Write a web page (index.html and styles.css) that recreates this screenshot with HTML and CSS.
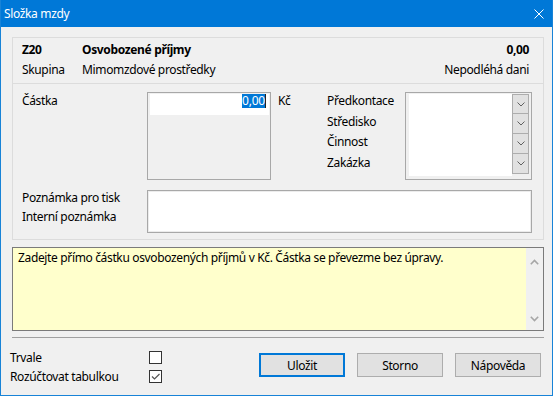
FILE: index.html
```html
<!DOCTYPE html>
<html lang="cs">
<head>
<meta charset="UTF-8">
<title>Složka mzdy</title>
<link rel="stylesheet" href="styles.css">
</head>
<body>
<div class="window">
<div class="titlebar">
<span class="title">Složka mzdy</span>
<svg class="close" width="10" height="10" viewBox="0 0 10 10"><path d="M0.5 0.5L9.5 9.5M9.5 0.5L0.5 9.5" stroke="#fff" stroke-width="1"/></svg>
</div>

<div class="client">
<div class="group">
<div class="head">
<div class="head-row bold">
<span>Z20</span>
<span>Osvobozené příjmy</span>
<span class="right">0,00</span>
</div>
<div class="head-row">
<span>Skupina</span>
<span>Mimomzdové prostředky</span>
<span class="right">Nepodléhá dani</span>
</div>
</div>

<div class="form">
<div class="amount-row">
<div class="label">Částka</div>
<div class="amount-box">
<div class="amount-field"><span class="sel">0,00</span><span class="caret"></span></div>
</div>
<div class="unit">Kč</div>
<div class="labels">
<div>Předkontace</div>
<div>Středisko</div>
<div>Činnost</div>
<div>Zakázka</div>
</div>
<div class="combo">
<div class="combo-list"></div>
<div class="combo-buttons">
<div class="drop"><svg width="8" height="5" viewBox="0 0 8 5"><path d="M0.5 0.5L4 4L7.5 0.5" fill="none" stroke="#606060"/></svg></div>
<div class="drop"><svg width="8" height="5" viewBox="0 0 8 5"><path d="M0.5 0.5L4 4L7.5 0.5" fill="none" stroke="#606060"/></svg></div>
<div class="drop"><svg width="8" height="5" viewBox="0 0 8 5"><path d="M0.5 0.5L4 4L7.5 0.5" fill="none" stroke="#606060"/></svg></div>
<div class="drop"><svg width="8" height="5" viewBox="0 0 8 5"><path d="M0.5 0.5L4 4L7.5 0.5" fill="none" stroke="#606060"/></svg></div>
</div>
</div>
</div>

<div class="note-row">
<div class="note-labels">
<div>Poznámka pro tisk</div>
<div>Interní poznámka</div>
</div>
<div class="note-box"></div>
</div>
</div>
</div>

<div class="hint">
<div class="hint-text">Zadejte přímo částku osvobozených příjmů v Kč. Částka se převezme bez úpravy.</div>
<div class="scrollbar">
<svg width="9" height="6" viewBox="0 0 9 6"><path d="M0.8 5.2L4.5 1.5L8.2 5.2" fill="none" stroke="#a6a6a6" stroke-width="1.6"/></svg>
<svg width="9" height="6" viewBox="0 0 9 6"><path d="M0.8 0.8L4.5 4.5L8.2 0.8" fill="none" stroke="#a6a6a6" stroke-width="1.6"/></svg>
</div>
</div>

<div class="separator"></div>

<div class="footer">
<div class="checks">
<div>Trvale</div>
<div class="checkbox"></div>
<div>Rozúčtovat tabulkou</div>
<div class="checkbox"><svg width="11" height="11" viewBox="0 0 11 11"><path d="M2 5.5L4.5 8L9.5 3" fill="none" stroke="#555" stroke-width="1.2"/></svg></div>
</div>
<div class="buttons">
<button class="btn default">Uložit</button>
<button class="btn">Storno</button>
<button class="btn">Nápověda</button>
</div>
</div>
</div>
</div>
</body>
</html>
```

FILE: styles.css
```css
body {
margin: 0;
font-family: "Noto Sans", "Open Sans", sans-serif;
font-size: 12px;
letter-spacing: -0.35px;
color: #000;
background: #f0f0f0;
}
.window {
width: 553px;
height: 396px;
box-sizing: border-box;
border: 1px solid #1883d7;
border-top: 0;
background: #f0f0f0;
display: flex;
flex-direction: column;
}
.titlebar {
height: 27px;
flex-shrink: 0;
background: #0078d7;
color: #fff;
display: flex;
align-items: center;
justify-content: space-between;
padding: 0 8px 0 3px;
}
.client {
flex: 1;
padding: 10px 8px 0 11px;
display: flex;
flex-direction: column;
}
.group {
border: 1px solid #dcdcdc;
}
.head {
padding: 2px 14px 3px 9px;
border-bottom: 1px solid #dcdcdc;
}
.head-row {
display: grid;
grid-template-columns: 60px 1fr auto;
line-height: 20px;
}
.bold {
font-weight: bold;
}
.form {
padding: 8px 11px 6px 9px;
}
.amount-row {
display: flex;
height: 88px;
}
.label {
width: 125px;
line-height: 20px;
margin-top: -1px;
}
.amount-box {
width: 124px;
box-sizing: border-box;
border: 1px solid #a8a8a8;
padding: 1px 1px 0 2px;
}
.amount-field {
height: 21px;
background: #fff;
display: flex;
justify-content: flex-end;
align-items: flex-start;
padding-right: 3px;
}
.sel {
background: #0078d7;
color: #fff;
line-height: 14px;
letter-spacing: -0.2px;
}
.caret {
width: 1px;
height: 14px;
background: #222;
}
.unit {
width: 56px;
padding-left: 7px;
box-sizing: border-box;
line-height: 20px;
margin-top: -1px;
}
.labels {
width: 78px;
line-height: 20.5px;
margin-top: -1px;
}
.combo {
flex: 1;
box-sizing: border-box;
border: 1px solid #a8a8a8;
padding: 1px 2px 3px 3px;
display: flex;
}
.combo-list {
flex: 1;
background: #fff;
}
.combo-buttons {
width: 17px;
display: flex;
flex-direction: column;
}
.drop {
height: 20px;
box-sizing: border-box;
background: #e1e1e1;
border: 1px solid #adadad;
border-top-width: 0;
display: flex;
align-items: center;
justify-content: center;
}
.drop:first-child {
border-top-width: 1px;
}
.note-row {
display: flex;
margin-top: 10px;
}
.note-labels {
width: 125px;
line-height: 19px;
margin-top: -2px;
}
.note-box {
flex: 1;
height: 43px;
box-sizing: border-box;
border: 1px solid #a8a8a8;
background: #fff;
box-shadow: inset 0 0 0 1px #ececec;
}
.hint {
margin-top: 7px;
height: 84px;
box-sizing: border-box;
border: 1px solid #7a7a7a;
background: #ffffcc;
display: flex;
}
.hint-text {
flex: 1;
padding: 2px 5px;
line-height: 15px;
}
.scrollbar {
width: 17px;
background: #f0f0f0;
display: flex;
flex-direction: column;
justify-content: space-between;
align-items: center;
padding: 11px 0 8px;
}
.separator {
margin-top: 6px;
border-top: 1px solid #a0a0a0;
}
.footer {
display: flex;
margin-left: -2px;
}
.checks {
display: grid;
grid-template-columns: 139px 13px;
grid-auto-rows: 19px;
align-items: center;
padding-top: 10px;
}
.checkbox {
width: 13px;
height: 13px;
box-sizing: border-box;
border: 1px solid #333;
background: #fff;
display: flex;
align-items: center;
justify-content: center;
}
.buttons {
display: flex;
gap: 12px;
margin-left: 97px;
padding-top: 15px;
}
.btn {
width: 86px;
height: 24px;
box-sizing: border-box;
border: 1px solid #adadad;
background: #e1e1e1;
font-family: inherit;
font-size: 12px;
letter-spacing: -0.35px;
color: #000;
padding: 0;
}
.btn.default {
border: 2px solid #0078d7;
}
```
